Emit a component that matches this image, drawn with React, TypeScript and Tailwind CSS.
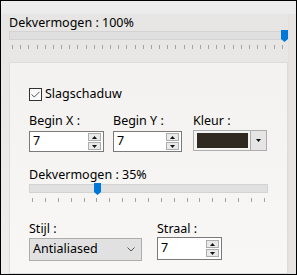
import React from "react";

const font = { fontFamily: '"Noto Sans", "Segoe UI", Arial, sans-serif' };

function Thumb() {
  return (
    <svg width="7" height="12" viewBox="0 0 7 12" className="block">
      <path d="M0 0 H7 V9 L3.5 12 L0 9 Z" fill="#0078d7" />
    </svg>
  );
}

function Ticks({ count }: { count: number }) {
  return (
    <div className="flex h-[4px] justify-between">
      {Array.from({ length: count }).map((_, i) => (
        <div key={i} className="h-[4px] w-px bg-[#a3a3a3]" />
      ))}
    </div>
  );
}

function Spin() {
  return (
    <div className="flex flex-col gap-px">
      <div className="flex h-[8px] w-[13px] items-center justify-center border border-[#adadad] bg-[#e9e9e9]">
        <svg width="5" height="3" viewBox="0 0 5 3">
          <path d="M0 3 L2.5 0 L5 3 Z" fill="#111" />
        </svg>
      </div>
      <div className="flex h-[8px] w-[13px] items-center justify-center border border-[#adadad] bg-[#e9e9e9]">
        <svg width="5" height="3" viewBox="0 0 5 3">
          <path d="M0 0 L2.5 3 L5 0 Z" fill="#111" />
        </svg>
      </div>
    </div>
  );
}

function NumberBox({ w, h, value }: { w: string; h: string; value: string }) {
  return (
    <div className={`flex ${w} ${h} items-center border border-[#7a7a7a] bg-white pl-[3px] pr-[2px]`}>
      <span className="flex-1 text-[12.5px] leading-none text-black">{value}</span>
      <Spin />
    </div>
  );
}

function Label({ children }: { children: React.ReactNode }) {
  return <div className="h-[16px] text-[12.5px] leading-[16px] text-black">{children}</div>;
}

export default function App() {
  return (
    <div
      style={font}
      className="flex h-[275px] w-[297px] flex-col overflow-hidden border border-black bg-gradient-to-b from-[#e6e5e3] to-[#f0eeec]"
    >
      <div className="h-[13px] shrink-0 bg-[#ececec]" />
      <div className="flex flex-1">
        <div className="flex flex-1 flex-col pl-[8px]">
          <div className="mt-[1px]">
            <Label>Dekvermogen : 100%</Label>
          </div>
          <div className="relative mt-[0px] h-[9px] w-[278px] border border-[#d3d3d3] bg-[#dfdfdf]">
            <div className="absolute right-[-2px] top-[-2px]">
              <Thumb />
            </div>
          </div>
          <div className="mt-[5px] w-[274px] pl-[3px]">
            <Ticks count={34} />
          </div>
          <div className="mt-[13px] flex-1 border border-[#dcdcdc] bg-gradient-to-b from-[#f3f2f0] to-[#f9f7f5] pl-[19px] pt-[23px]">
            <div className="flex items-center gap-[3px]">
              <div className="flex h-[13px] w-[13px] items-center justify-center border border-[#333] bg-[#fbfbfb]">
                <svg width="9" height="7" viewBox="0 0 9 7">
                  <path d="M0.5 3.5 L3.3 6 L8.5 0.8" fill="none" stroke="#555" strokeWidth="1" />
                </svg>
              </div>
              <Label>Slagschaduw</Label>
            </div>
            <div className="mt-[11px] flex">
              <div className="flex w-[84px] flex-col">
                <Label>Begin X :</Label>
                <div className="mt-[2px]">
                  <NumberBox w="w-[75px]" h="h-[21px]" value="7" />
                </div>
              </div>
              <div className="flex w-[80px] flex-col">
                <Label>Begin Y :</Label>
                <div className="mt-[2px]">
                  <NumberBox w="w-[69px]" h="h-[21px]" value="7" />
                </div>
              </div>
              <div className="flex flex-col">
                <Label>Kleur :</Label>
                <div className="mt-[1px] flex h-[21px] w-[74px] border border-[#adadad] bg-[#f4f4f4]">
                  <div className="flex-1 p-[2px] pl-[3px]">
                    <div className="h-full w-full bg-[#2f2921]" />
                  </div>
                  <div className="flex w-[16px] items-center justify-center border-l border-[#adadad] bg-[#e5e5e5]">
                    <svg width="5" height="3" viewBox="0 0 5 3">
                      <path d="M0 0 L2.5 3 L5 0 Z" fill="#111" />
                    </svg>
                  </div>
                </div>
              </div>
            </div>
            <div className="mt-[15px]">
              <Label>Dekvermogen : 35%</Label>
            </div>
            <div className="relative mt-[1px] h-[9px] w-[239px] border border-[#d3d3d3] bg-[#e1e1e1]">
              <div className="absolute left-[64px] top-[-2px]">
                <Thumb />
              </div>
            </div>
            <div className="mt-[5px] w-[236px] pl-[3px]">
              <Ticks count={19} />
            </div>
            <div className="mt-[19px] flex">
              <div className="flex w-[128px] flex-col">
                <Label>Stijl :</Label>
                <div className="mt-[1px] flex h-[23px] w-[113px] items-center border border-[#adadad] bg-[#e1e1e1] pl-[3px] pr-[6px]">
                  <span className="flex-1 text-[12.5px] text-black">Antialiased</span>
                  <svg width="8" height="5" viewBox="0 0 8 5">
                    <path d="M0.5 0.5 L4 4 L7.5 0.5" fill="none" stroke="#555" strokeWidth="1" />
                  </svg>
                </div>
              </div>
              <div className="flex flex-col">
                <Label>Straal :</Label>
                <div>
                  <NumberBox w="w-[65px]" h="h-[23px]" value="7" />
                </div>
              </div>
            </div>
          </div>
        </div>
        <div className="w-[8px] shrink-0 border-l border-[#e2e0de] bg-[#e7e5e3]" />
      </div>
    </div>
  );
}
